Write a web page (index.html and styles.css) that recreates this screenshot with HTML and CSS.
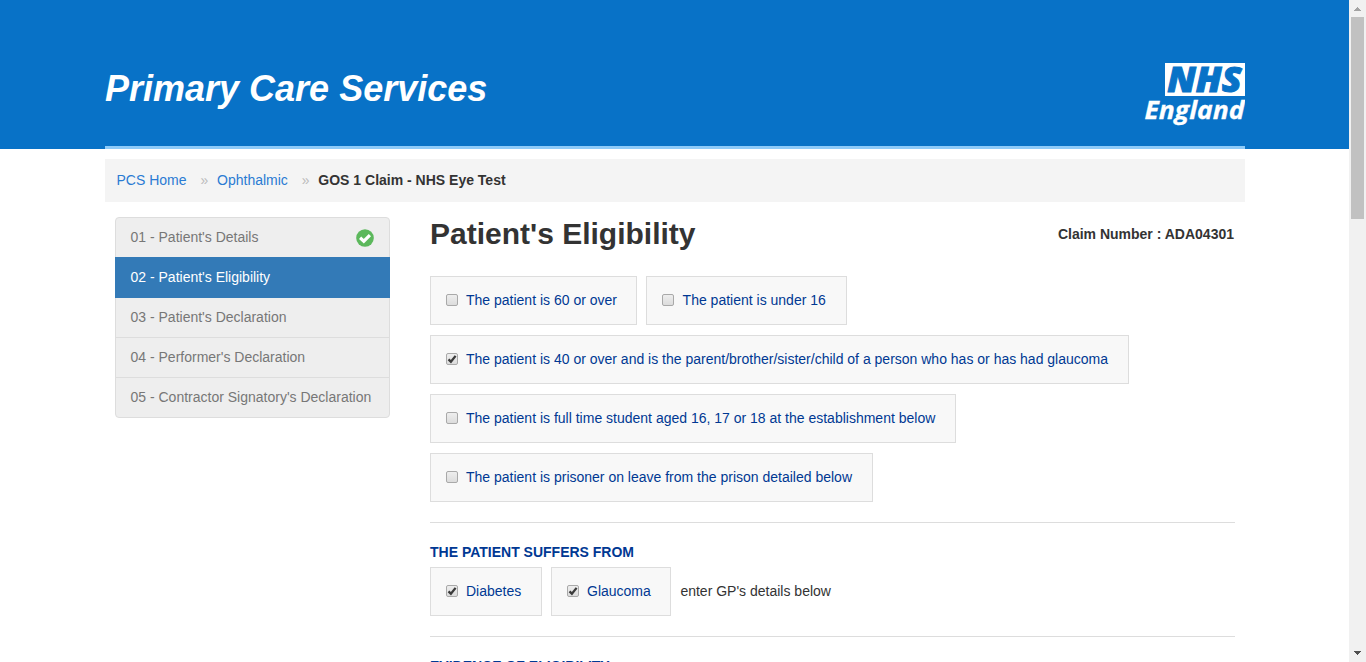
FILE: index.html
```html
<!DOCTYPE html>
<html lang="en">
<head>
<meta charset="utf-8">
<title>Patient's Eligibility</title>
<link rel="stylesheet" href="styles.css">
</head>
<body>
<div class="page">
  <header class="header">
    <div class="container header-inner">
      <div class="brand">Primary Care Services</div>
      <svg class="logo" width="101" height="64" viewBox="0 0 101 64">
        <rect x="21" y="0" width="80" height="33" fill="#fff"/>
        <text class="logo-nhs" x="23.2" y="29.3" textLength="74.5" lengthAdjust="spacingAndGlyphs">NHS</text>
        <text class="logo-england" x="0.5" y="56.2" textLength="100" lengthAdjust="spacingAndGlyphs">England</text>
      </svg>
    </div>
  </header>
  <nav class="container breadcrumb">
    <a>PCS Home</a><span class="sep">»</span><a>Ophthalmic</a><span class="sep">»</span><b>GOS 1 Claim - NHS Eye Test</b>
  </nav>
  <div class="container columns">
    <ul class="steps">
      <li>01 - Patient's Details
        <svg width="18" height="18" viewBox="0 0 18 18"><circle cx="9" cy="9" r="8.8" fill="#5cb85c"/><path d="M4.1 8.8 L7.8 12.2 L13.9 6.2" fill="none" stroke="#fff" stroke-width="3.2"/></svg>
      </li>
      <li class="active">02 - Patient's Eligibility</li>
      <li>03 - Patient's Declaration</li>
      <li>04 - Performer's Declaration</li>
      <li>05 - Contractor Signatory's Declaration</li>
    </ul>
    <main class="main">
      <div class="title-row">
        <h1>Patient's Eligibility</h1>
        <b class="claim">Claim Number : ADA04301</b>
      </div>
      <div class="row">
        <label class="option w207"><span class="box"></span>The patient is 60 or over</label>
        <label class="option w201"><span class="box wide"></span>The patient is under 16</label>
      </div>
      <div class="row">
        <label class="option w699"><span class="box"><svg width="12" height="12" viewBox="0 0 12 12"><path d="M2.5 6.4 L4.9 8.7 L9.6 2.9" /></svg></span>The patient is 40 or over and is the parent/brother/sister/child of a person who has or has had glaucoma</label>
      </div>
      <div class="row">
        <label class="option w526"><span class="box"></span>The patient is full time student aged 16, 17 or 18 at the establishment below</label>
      </div>
      <div class="row">
        <label class="option w443"><span class="box"></span>The patient is prisoner on leave from the prison detailed below</label>
      </div>
      <hr>
      <h2>THE PATIENT SUFFERS FROM</h2>
      <div class="row">
        <label class="option w112"><span class="box"><svg width="12" height="12" viewBox="0 0 12 12"><path d="M2.5 6.4 L4.9 8.7 L9.6 2.9" /></svg></span>Diabetes</label>
        <label class="option w120"><span class="box"><svg width="12" height="12" viewBox="0 0 12 12"><path d="M2.5 6.4 L4.9 8.7 L9.6 2.9" /></svg></span>Glaucoma</label>
        <span class="note">enter GP's details below</span>
      </div>
      <hr>
      <h2>EVIDENCE OF ELIGIBILITY</h2>
    </main>
  </div>
</div>
<div class="scrollbar">
  <svg width="17" height="17" viewBox="0 0 17 17"><path d="M5 11h7v-1h-1v-1h-1v-1h-1v-1h-1v1h-1v1h-1v1h-1z" fill="#a3a3a3"/></svg>
  <div class="thumb"></div>
  <svg class="down" width="17" height="17" viewBox="0 0 17 17"><path d="M5 6h7v1h-1v1h-1v1h-1v1h-1v-1h-1v-1h-1v-1h-1z" fill="#505050"/></svg>
</div>
</body>
</html>
```
FILE: styles.css
```css
* { box-sizing: border-box; }
body {
  margin: 0;
  height: 662px;
  display: flex;
  overflow: hidden;
  background: #fff;
  color: #333;
  font: 14px/20px "Liberation Sans", Arial, sans-serif;
}
.page { width: 1349px; height: 662px; overflow: hidden; }
.container { width: 1140px; margin-left: 105px; }
.header { height: 149px; background: #0872c7; }
.header-inner {
  display: flex;
  justify-content: space-between;
  align-items: flex-start;
  height: 149px;
  padding-top: 63px;
  border-bottom: 3px solid #8ecbf9;
}
.brand {
  color: #fff;
  font-size: 36px;
  font-weight: bold;
  font-style: italic;
  line-height: 52px;
  white-space: nowrap;
}
.logo { display: block; }
.logo-nhs, .logo-england { font-family: "Open Sans", "Noto Sans", sans-serif; font-weight: 800; font-style: italic; }
.logo-nhs { font-size: 35.5px; fill: #0872c7; stroke: #0872c7; stroke-width: 1px; }
.logo-england { font-size: 25px; font-weight: 700; fill: #fff; stroke: #fff; stroke-width: 0.3px; }
.breadcrumb {
  display: flex;
  height: 43px;
  margin-top: 10px;
  padding: 11px 11.5px;
  background: #f4f4f4;
}
.breadcrumb a { color: #2a7bd3; }
.sep { width: 30.5px; padding-left: 14px; color: #bbb; }
.columns { display: flex; padding: 0 10px; }
.steps {
  width: 275px;
  height: 201px;
  margin: 15px 40px 0 0;
  padding: 0;
  list-style: none;
}
.steps li {
  display: flex;
  justify-content: space-between;
  align-items: center;
  height: 41px;
  margin-bottom: -1px;
  padding: 0 15px 1px 14.5px;
  background: #eee;
  border: 1px solid #ddd;
  color: #777;
}
.steps li:first-child { border-radius: 4px 4px 0 0; }
.steps li:last-child { border-radius: 0 0 4px 4px; }
.steps .active { position: relative; background: #337ab7; border-color: #337ab7; color: #fff; }
.steps svg { margin-top: 2px; }
.main { width: 805px; }
.title-row { display: flex; justify-content: space-between; height: 74px; padding-top: 12px; }
h1 { margin: 0; font-size: 30px; line-height: 40px; }
.claim { line-height: 20px; margin: 10px 1px 0 0; }
.row { display: flex; gap: 9px; margin-bottom: 10px; }
.option {
  display: flex;
  align-items: center;
  height: 49px;
  padding: 0 0 1px 15px;
  background: #f8f8f8;
  border: 1px solid #ddd;
  color: #003893;
  white-space: nowrap;
}
.w207 { width: 207px; }
.w201 { width: 201px; }
.w699 { width: 699px; }
.w526 { width: 526px; }
.w443 { width: 443px; }
.w112 { width: 112px; }
.w120 { width: 120px; }
.box {
  width: 12px;
  height: 12px;
  margin-right: 8px;
  border: 1px solid #a9a9a9;
  border-radius: 2px;
  background: linear-gradient(#eee, #dcdcdc);
}
.box.wide { margin-right: 8.6px; }
.box svg { display: block; margin: -1px; }
.box path { fill: none; stroke: #3b3b3b; stroke-width: 2.3px; }
.note { line-height: 49px; padding-left: 0.4px; }
hr { height: 1px; margin: 20px 0 19px; border: 0; background: #ddd; }
h2 { margin: 0 0 5px; font-size: 14px; line-height: 20px; color: #003893; white-space: nowrap; }
.scrollbar { display: flex; flex-direction: column; width: 17px; height: 662px; background: #f1f1f1; }
.scrollbar svg { display: block; }
.thumb { width: 13px; height: 202px; margin-left: 2px; background: #c1c1c1; }
.down { margin-top: auto; }
```
